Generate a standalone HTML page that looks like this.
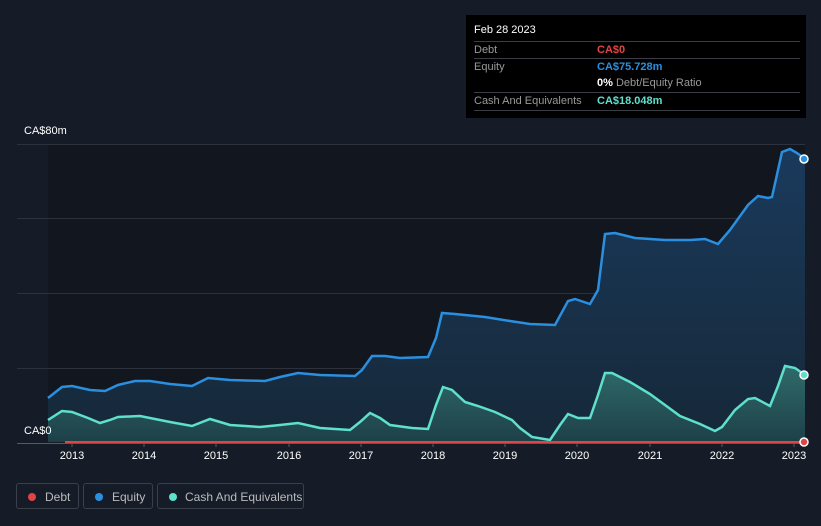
<!DOCTYPE html><html><head><style>
body{margin:0;width:821px;height:526px;background:#161c27;font-family:"Liberation Sans",sans-serif;overflow:hidden;position:relative}
.tt{position:absolute;left:466px;top:15px;width:340px;height:103px;background:#000;color:#fff;font-size:11px}
.tt .r{position:absolute;left:8px;right:6px;height:17px;border-top:1px solid #3a3d44;line-height:17px;color:#999}
.tt .r span{position:absolute;left:123px;font-weight:bold}
.lg{position:absolute;top:483px;height:26px;border:1px solid #3a3f4a;border-radius:3px;color:#bbb;font-size:12px;line-height:26px;box-sizing:border-box}
.lg i{position:absolute;left:11px;top:9px;width:8px;height:8px;border-radius:50%}
.ax{position:absolute;top:450px;color:#fff;font-size:11px;transform:translateX(-50%)}
</style></head><body>
<svg width="821" height="526" style="position:absolute;left:0;top:0">
<defs><linearGradient id="g1" x1="0" y1="0" x2="0" y2="1"><stop offset="0" stop-color="#1a3a5c"/><stop offset="1" stop-color="#162838"/></linearGradient>
<linearGradient id="g2" x1="0" y1="0" x2="0" y2="1"><stop offset="0" stop-color="#2f6b6a"/><stop offset="1" stop-color="#1e4048"/></linearGradient></defs>
<rect x="48" y="144" width="757" height="298" fill="#12161e"/>
<g stroke="#2c313b" stroke-width="1"><line x1="17" y1="144.5" x2="805" y2="144.5"/><line x1="17" y1="218.5" x2="805" y2="218.5"/><line x1="17" y1="293.5" x2="805" y2="293.5"/><line x1="17" y1="368.5" x2="805" y2="368.5"/></g>
<path fill="url(#g1)" stroke="none" d="M48,398 L62,387 72,386 90,390 105,391 118,385 135,381 150,381 170,384 192,386 208,378 230,380 265,381 280,377 298,373 320,375 355,376 362,370 372,356 385,356 400,358 428,357 436,338 442,313 455,314 485,317 510,321 530,324 555,325 568,301 575,299 590,304 598,290 605,234 615,233 635,238 665,240 690,240 705,239 718,244 730,230 748,205 758,196 768,198 772,197 782,152 790,149 797,153 805,159 L805,442 L48,442Z"/>
<path fill="none" stroke="#2b8fe0" stroke-width="2.5" d="M48,398 L62,387 72,386 90,390 105,391 118,385 135,381 150,381 170,384 192,386 208,378 230,380 265,381 280,377 298,373 320,375 355,376 362,370 372,356 385,356 400,358 428,357 436,338 442,313 455,314 485,317 510,321 530,324 555,325 568,301 575,299 590,304 598,290 605,234 615,233 635,238 665,240 690,240 705,239 718,244 730,230 748,205 758,196 768,198 772,197 782,152 790,149 797,153 805,159"/>
<path fill="url(#g2)" d="M48,420 L62,411 72,412 88,418 100,423 110,420 118,417 140,416 170,422 192,426 210,419 230,425 260,427 280,425 298,423 320,428 350,430 360,422 370,413 380,418 390,425 412,428 428,429 436,405 443,387 452,390 465,402 478,406 495,412 512,420 520,428 532,437 550,440 560,425 568,414 578,418 590,418 598,395 605,373 612,373 630,382 650,394 665,405 680,416 700,424 715,431 722,427 735,410 748,399 755,398 770,406 778,386 785,366 795,368 805,375 L805,442 L48,442Z"/>
<path fill="none" stroke="#5ee0cc" stroke-width="2.5" d="M48,420 L62,411 72,412 88,418 100,423 110,420 118,417 140,416 170,422 192,426 210,419 230,425 260,427 280,425 298,423 320,428 350,430 360,422 370,413 380,418 390,425 412,428 428,429 436,405 443,387 452,390 465,402 478,406 495,412 512,420 520,428 532,437 550,440 560,425 568,414 578,418 590,418 598,395 605,373 612,373 630,382 650,394 665,405 680,416 700,424 715,431 722,427 735,410 748,399 755,398 770,406 778,386 785,366 795,368 805,375"/>
<line x1="65" y1="442" x2="805" y2="442" stroke="#e04545" stroke-width="2"/>
<line x1="17" y1="443.5" x2="805" y2="443.5" stroke="#555b66"/>
<g stroke="#555b66"><line x1="72" y1="443" x2="72" y2="447"/><line x1="144" y1="443" x2="144" y2="447"/><line x1="216" y1="443" x2="216" y2="447"/><line x1="289" y1="443" x2="289" y2="447"/><line x1="361" y1="443" x2="361" y2="447"/><line x1="433" y1="443" x2="433" y2="447"/><line x1="505" y1="443" x2="505" y2="447"/><line x1="577" y1="443" x2="577" y2="447"/><line x1="650" y1="443" x2="650" y2="447"/><line x1="722" y1="443" x2="722" y2="447"/><line x1="794" y1="443" x2="794" y2="447"/></g>
<circle cx="804" cy="159" r="4" fill="#2b8fe0" stroke="#fff" stroke-width="1.5"/>
<circle cx="804" cy="375" r="4" fill="#5ee0cc" stroke="#fff" stroke-width="1.5"/>
<circle cx="804" cy="442" r="4" fill="#e04545" stroke="#fff" stroke-width="1.5"/>
</svg>
<div style="position:absolute;left:24px;top:125px;color:#fff;font-size:11px">CA$80m</div>
<div style="position:absolute;left:24px;top:425px;color:#fff;font-size:11px">CA$0</div>
<div class="ax" style="left:72px">2013</div><div class="ax" style="left:144px">2014</div><div class="ax" style="left:216px">2015</div><div class="ax" style="left:289px">2016</div><div class="ax" style="left:361px">2017</div><div class="ax" style="left:433px">2018</div><div class="ax" style="left:505px">2019</div><div class="ax" style="left:577px">2020</div><div class="ax" style="left:650px">2021</div><div class="ax" style="left:722px">2022</div><div class="ax" style="left:794px">2023</div>
<div class="tt">
<div style="position:absolute;left:8px;top:9px;font-size:11px">Feb 28 2023</div>
<div class="r" style="top:26px">Debt<span style="color:#e04545">CA$0</span></div>
<div class="r" style="top:43px">Equity<span style="color:#2b8fe0">CA$75.728m</span></div>
<div class="r" style="top:60px;border-top:none"><span style="color:#fff">0% <b style="color:#999;font-weight:normal">Debt/Equity Ratio</b></span></div>
<div class="r" style="top:77px">Cash And Equivalents<span style="color:#5ee0cc">CA$18.048m</span></div>
<div style="position:absolute;left:8px;right:6px;top:95px;border-top:1px solid #3a3d44"></div>
</div>
<div class="lg" style="left:16px;width:63px"><i style="background:#e04545"></i><span style="position:absolute;left:28px">Debt</span></div>
<div class="lg" style="left:83px;width:70px"><i style="background:#2b8fe0"></i><span style="position:absolute;left:28px">Equity</span></div>
<div class="lg" style="left:157px;width:147px"><i style="background:#5ee0cc"></i><span style="position:absolute;left:27px">Cash And Equivalents</span></div>
</body></html>
